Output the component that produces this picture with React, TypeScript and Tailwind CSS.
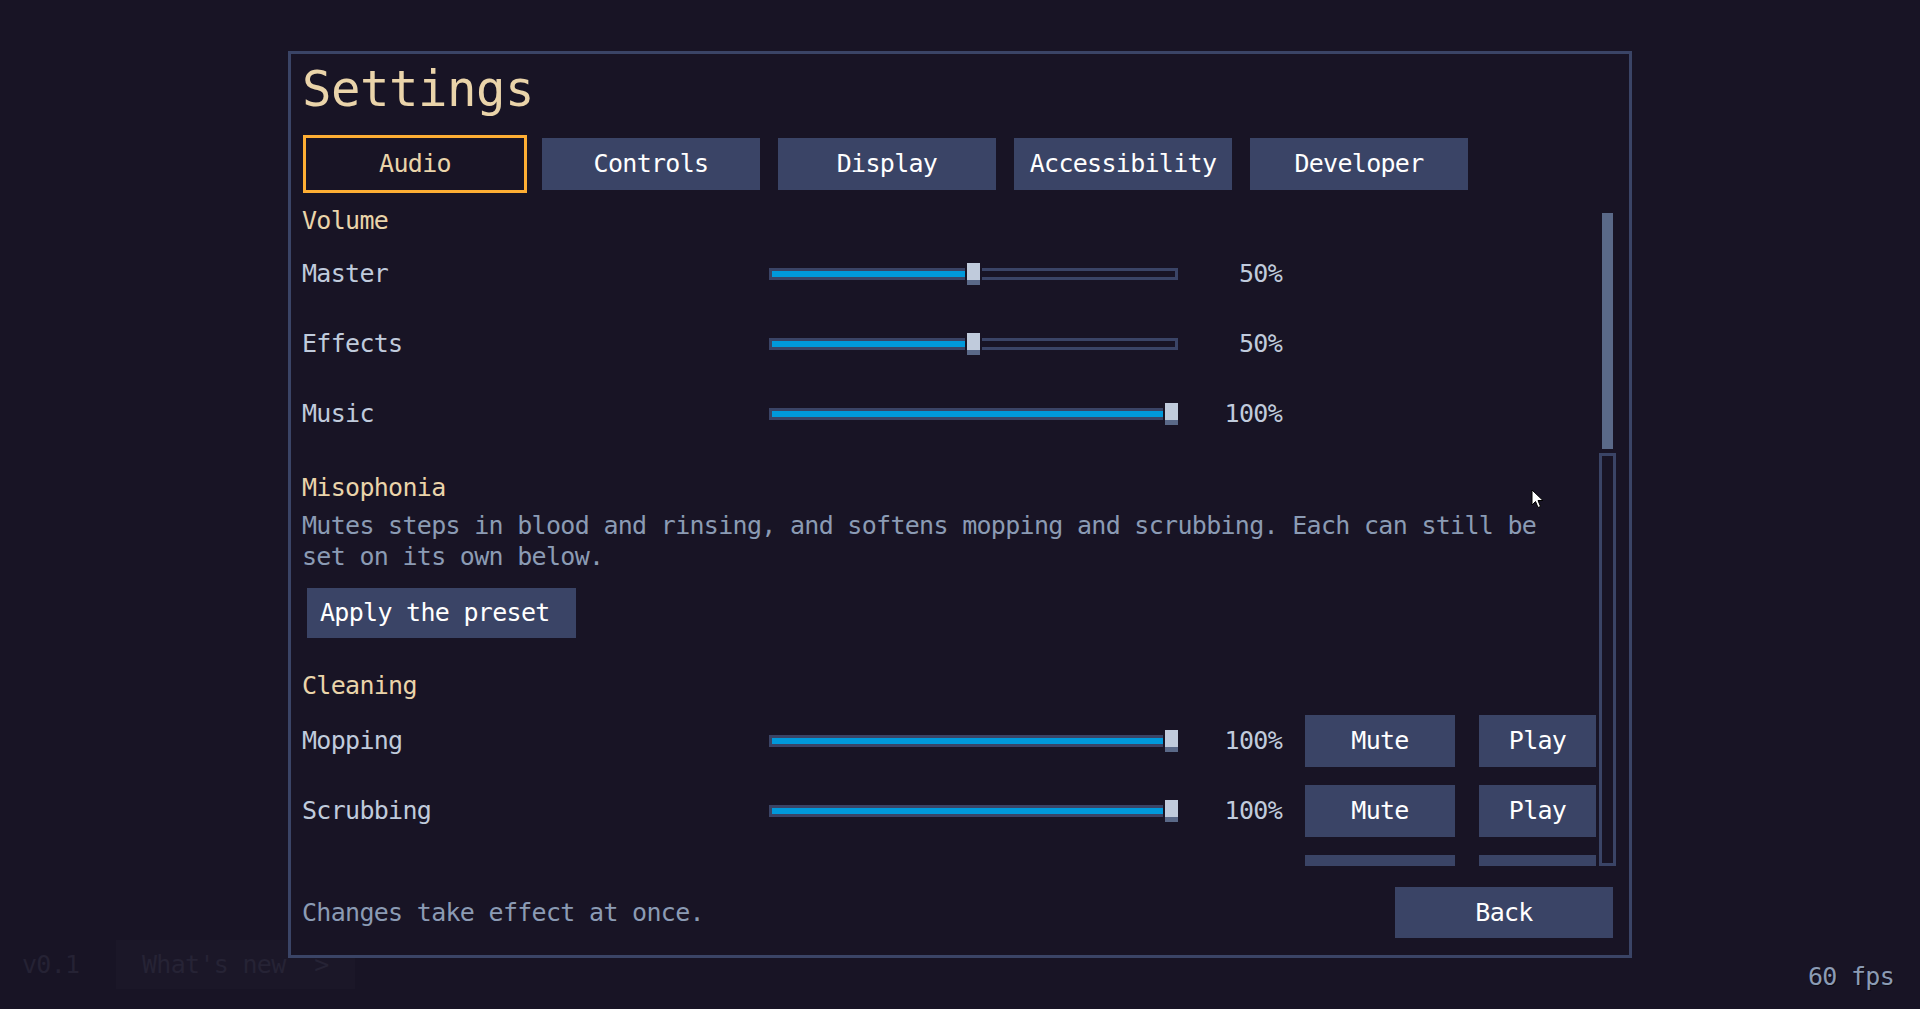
import React from 'react';

type Channel = { name: string; value: number };

const tabs = ['Audio', 'Controls', 'Display', 'Accessibility', 'Developer'];

const volume: Channel[] = [
  { name: 'Master', value: 50 },
  { name: 'Effects', value: 50 },
  { name: 'Music', value: 100 },
];

const cleaning: Channel[] = [
  { name: 'Mopping', value: 100 },
  { name: 'Scrubbing', value: 100 },
];

const TRACK_W = 409;
const THUMB_W = 13;

function Slider({ value }: { value: number }) {
  // thumb travels inside the track, so 100% sits flush with the right edge
  const left = Math.round((value / 100) * (TRACK_W - THUMB_W));
  return (
    <div className="relative h-[12px] w-[409px] shrink-0 border-[3px] border-[#3a4466]">
      <div className="absolute left-0 top-0 h-full bg-[#0099db]" style={{ width: Math.max(left - 3, 0) }} />
      <div
        className="absolute top-[-8px] h-[22px] w-[13px] border-b-[5px] border-[#5a6988] bg-[#c0cbdc] shadow-[2px_0_0_#181425,-2px_0_0_#181425]"
        style={{ left: left - 3 }}
      />
    </div>
  );
}

function PixelButton({ label, className }: { label?: string; className?: string }) {
  return (
    <button className={`bg-[#3a4466] text-white ${className ?? ''}`}>{label}</button>
  );
}

function ChannelRow({ ch, withButtons }: { ch: Channel; withButtons?: boolean }) {
  return (
    <div className={`flex items-center ${withButtons ? 'h-[52px]' : 'h-[48px]'}`}>
      <div className="w-[467px] shrink-0 text-[#c0cbdc]">{ch.name}</div>
      <Slider value={ch.value} />
      <div className="w-[104px] shrink-0 text-right text-[#c0cbdc]">{ch.value}%</div>
      {withButtons && (
        <div className="ml-[23px] flex gap-[24px]">
          <PixelButton label="Mute" className="h-[52px] w-[150px]" />
          <PixelButton label="Play" className="h-[52px] w-[117px]" />
        </div>
      )}
    </div>
  );
}

function Heading({ children, className }: { children: React.ReactNode; className?: string }) {
  return <div className={`h-[30px] text-[#ead4aa] ${className ?? ''}`}>{children}</div>;
}

function Cursor() {
  return (
    <svg className="absolute left-[1531px] top-[489px] z-20" width="13" height="20" viewBox="0 0 13 20">
      <path d="M1 1 L1 16 L4.5 12.5 L7 18.5 L9.5 17.5 L7 11.5 L12 11.5 Z" fill="#ffffff" stroke="#000000" strokeWidth="1" />
    </svg>
  );
}

export default function App() {
  return (
    <div className="relative flex h-screen w-full items-center justify-center overflow-hidden bg-[#181425] font-['DejaVu_Sans_Mono',monospace] text-[25px] leading-[30px] tracking-[-0.7px]">
      {/* corner HUD sitting under the menu */}
      <div className="absolute left-[22px] top-[950px] text-[#252234]">v0.1</div>
      <div className="absolute left-[116px] top-[940px] flex h-[49px] w-[239px] items-center bg-[#1b1728] pl-[26px] text-[#262335]">
        What's new&nbsp;&nbsp;&gt;
      </div>
      <div className="absolute right-[26px] top-[962px] text-[#8b9bb4] [text-shadow:1px_1px_0_#0c0a14]">60 fps</div>

      <div className="relative z-10 flex h-[907px] w-[1344px] flex-col border-[3px] border-[#3a4466] bg-[#181425] pb-[17px] pl-[11px] pr-[13px] pt-[7px]">
        <h1 className="h-[58px] text-[49px] leading-[58px] tracking-[-0.5px] text-[#ead4aa]">Settings</h1>

        <div className="ml-[4px] mt-[19px] flex gap-[18px]">
          {tabs.map((t, i) => (
            <button
              key={t}
              className={`h-[52px] w-[218px] ${
                i === 0 ? 'text-[#ead4aa] outline-3 outline-[#feae34]' : 'bg-[#3a4466] text-white'
              }`}
            >
              {t}
            </button>
          ))}
        </div>

        <div className="mt-[16px] flex h-[660px] gap-[3px] overflow-hidden">
          <div className="w-[1294px] shrink-0">
            <Heading>Volume</Heading>
            <div className="mt-[14px] flex flex-col gap-[22px]">
              {volume.map((ch) => (
                <ChannelRow key={ch.name} ch={ch} />
              ))}
            </div>

            <Heading className="mt-[35px]">Misophonia</Heading>
            <p className="mt-[7px] max-w-[1260px] leading-[31px] text-[#8b9bb4]">
              Mutes steps in blood and rinsing, and softens mopping and scrubbing. Each can still be set on its own below.
            </p>
            <PixelButton label="Apply the preset" className="ml-[5px] mt-[16px] block h-[50px] w-[269px] pl-[13px] text-left" />

            <Heading className="mt-[33px]">Cleaning</Heading>
            <div className="mt-[14px] flex flex-col gap-[18px]">
              {cleaning.map((ch) => (
                <ChannelRow key={ch.name} ch={ch} withButtons />
              ))}
              {/* next row, scrolled mostly out of view */}
              <div className="ml-[1003px] flex gap-[24px]">
                <PixelButton className="h-[52px] w-[150px]" />
                <PixelButton className="h-[52px] w-[117px]" />
              </div>
            </div>
          </div>

          {/* scrollbar: filled grabber, outlined track below it */}
          <div className="flex w-[17px] shrink-0 flex-col pt-[7px]">
            <div className="mx-auto h-[236px] w-[11px] bg-[#5a6988]" />
            <div className="mt-[4px] flex-1 border-[3px] border-[#3a4466]" />
          </div>
        </div>

        <div className="mt-[21px] flex h-[51px] items-center justify-between">
          <div className="text-[#8b9bb4]">Changes take effect at once.</div>
          <PixelButton label="Back" className="mr-[3px] h-[51px] w-[218px]" />
        </div>
      </div>

      <Cursor />
    </div>
  );
}
